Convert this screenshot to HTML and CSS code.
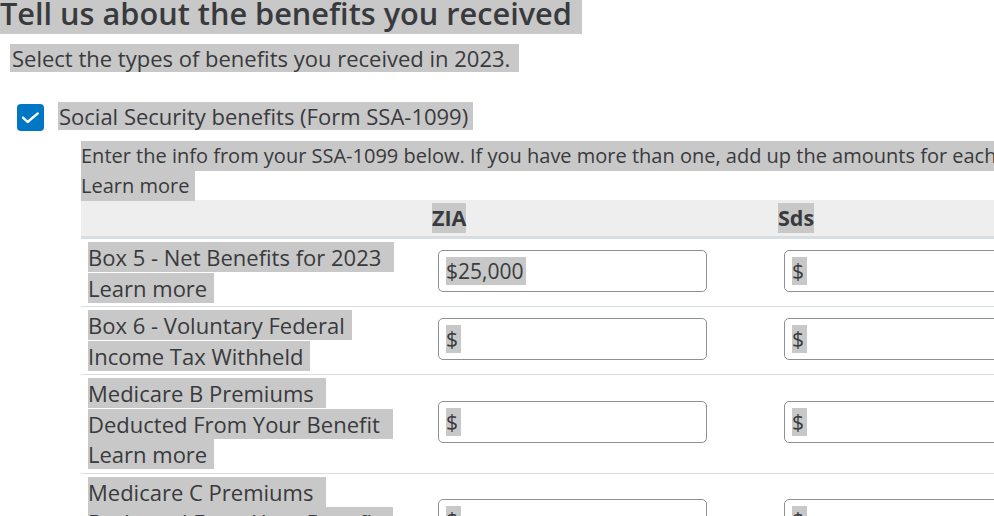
FILE: index.html
```html
<!DOCTYPE html>
<html lang="en">
<head>
<meta charset="utf-8">
<title>Tell us about the benefits you received</title>
<link rel="stylesheet" href="styles.css">
</head>
<body>
<div class="page">
  <h1 class="title"><span class="hl">Tell us about the benefits you received</span></h1>
  <p class="subtitle"><span class="hl">Select the types of benefits you received in 2023.</span></p>

  <div class="option">
    <span class="checkbox">
      <svg viewBox="0 0 27 27" width="27" height="27" aria-hidden="true">
        <path d="M6 13.6 L10.6 18 L20.8 9.4" fill="none" stroke="#fff" stroke-width="2.4" stroke-linecap="round" stroke-linejoin="round"/>
      </svg>
    </span>
    <span class="option-label"><span class="hl">Social Security benefits (Form SSA-1099)</span></span>
  </div>

  <div class="details">
    <p class="intro"><span class="hl nowrap">Enter the info from your SSA-1099 below. If you have more than one, add up the amounts for each box and enter the totals.</span><br><span class="hl">Learn more</span></p>

    <div class="table">
      <div class="row head">
        <div class="cell"></div>
        <div class="cell th"><span class="hl">ZIA</span></div>
        <div class="cell th"><span class="hl">Sds</span></div>
      </div>

      <div class="row">
        <div class="cell label"><span class="hl">Box 5 - Net Benefits for 2023&nbsp;</span><br><span class="hl">Learn more</span></div>
        <div class="cell"><div class="field"><span class="hl">$25,000</span></div></div>
        <div class="cell"><div class="field"><span class="hl">$</span></div></div>
      </div>

      <div class="row">
        <div class="cell label"><span class="hl">Box 6 - Voluntary Federal</span><br><span class="hl">Income Tax Withheld</span></div>
        <div class="cell"><div class="field"><span class="hl">$</span></div></div>
        <div class="cell"><div class="field"><span class="hl">$</span></div></div>
      </div>

      <div class="row">
        <div class="cell label"><span class="hl">Medicare B Premiums&nbsp;</span><br><span class="hl">Deducted From Your Benefit&nbsp;</span><br><span class="hl">Learn more</span></div>
        <div class="cell"><div class="field"><span class="hl">$</span></div></div>
        <div class="cell"><div class="field"><span class="hl">$</span></div></div>
      </div>

      <div class="row">
        <div class="cell label"><span class="hl">Medicare C Premiums&nbsp;</span><br><span class="hl">Deducted From Your Benefit&nbsp;</span><br><span class="hl">Learn more</span></div>
        <div class="cell"><div class="field"><span class="hl">$</span></div></div>
        <div class="cell"><div class="field"><span class="hl">$</span></div></div>
      </div>
    </div>
  </div>
</div>
</body>
</html>
```

FILE: styles.css
```css
html, body {
  margin: 0;
  padding: 0;
  background: #ffffff;
  overflow: hidden;
}

body {
  font-family: "Open Sans", "Noto Sans", "Liberation Sans", sans-serif;
  font-variant-ligatures: none;
  color: #393a3d;
}

.page {
  width: 1200px;
}

.hl {
  background: #c8c8c8;
  -webkit-box-decoration-break: slice;
  box-decoration-break: slice;
}

.nowrap {
  white-space: nowrap;
}

.title {
  margin: -5px 0 0 0;
  font-size: 30.7px;
  font-weight: 600;
  line-height: 36px;
}

.title .hl {
  padding-right: 10px;
}

.subtitle {
  margin: 13px 0 0 0;
  padding-left: 10px;
  font-size: 22px;
  line-height: 28px;
}

.subtitle .hl {
  padding: 0 9px 0 2px;
  background: linear-gradient(to bottom, transparent 1px, #c8c8c8 1px, #c8c8c8 calc(100% - 1px), transparent calc(100% - 1px));
}

.option {
  display: flex;
  align-items: flex-start;
  gap: 14px;
  margin: 30px 0 0 17px;
}

.checkbox {
  display: flex;
  width: 27px;
  height: 27px;
  margin-top: 2px;
  border-radius: 4px;
  background: #0077c5;
  flex: none;
}

.option-label {
  font-size: 22px;
  line-height: 28px;
}

.option-label .hl {
  padding: 0 5px 0 1px;
  background: linear-gradient(to bottom, transparent 1px, #c8c8c8 1px, #c8c8c8 calc(100% - 1px), transparent calc(100% - 1px));
}

.details {
  margin: 10px 0 0 81px;
}

.intro {
  margin: 0;
  font-size: 20px;
  line-height: 29.5px;
}

.intro .hl {
  padding: 1px 0 2px;
}

.intro .hl:last-child {
  padding-right: 6px;
}

.row {
  display: grid;
  grid-template-columns: 351px 346px 346px;
  border-bottom: 1px solid #d6dee3;
}

.row.head {
  background: #eeeeee;
  border-bottom: 3px solid #d6dee3;
  height: 36px;
  align-items: center;
}

.th {
  font-size: 21.5px;
  font-weight: 700;
  line-height: 30px;
}

.cell {
  display: flex;
  align-items: center;
}

.cell.label {
  display: block;
  padding: 3px 0 3px 7px;
  font-size: 22px;
  line-height: 30.5px;
}

.label .hl {
  padding-right: 7px;
}

.field {
  box-sizing: border-box;
  width: 269px;
  height: 42px;
  margin-left: 6px;
  margin-top: -4px;
  border: 1px solid #8d9096;
  border-radius: 5px;
  padding: 0 7px;
  display: flex;
  align-items: center;
  font-size: 21px;
}

.field .hl {
  padding-right: 3px;
}
```
